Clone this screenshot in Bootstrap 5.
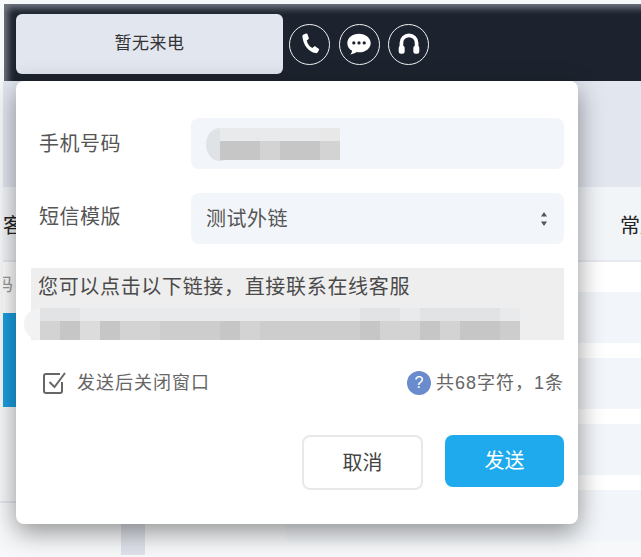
<!DOCTYPE html>
<html lang="zh">
<head>
<meta charset="utf-8">
<title>短信</title>
<link rel="stylesheet" href="https://cdn.jsdelivr.net/npm/bootstrap@5.3.0/dist/css/bootstrap.min.css">
<style>
html,body{height:557px;overflow:hidden}
body{background:#f7f8f9;font-family:"Liberation Sans","Noto Sans CJK SC",sans-serif;color:#555;position:relative}
.topgap{height:4px}
.callbar{height:77px;margin-left:4px;background:#1d232e;box-shadow:inset 7px 7px 7px -3px rgba(190,195,205,.55);padding:10px 0 7px 12px;gap:6px}
.callbox{width:267px;height:60px;background:#e2e6ef;border-radius:6px;color:#333;font-size:17px;letter-spacing:.5px}
.callicons{height:60px;gap:8.5px}
.roundbtn{width:41px;height:41px;border:1.5px solid #f2f2f2;border-radius:50%}
.roundbtn svg{width:26px;height:26px}
.band1{height:106px;background:#e2e6ef;margin-left:3px}
.band2{height:75px;background:#f2f5f8;border-bottom:2px solid #e6e9ee;color:#222;font-size:20px;padding-top:24px;margin-left:3px;overflow:hidden;white-space:nowrap}
.headright{margin-right:-19px}
.below{height:295px}
.leftcol{width:16px;font-size:18px;color:#999}
.leftcol .lettop{height:51px;background:#fff;padding:10px 0 0 0;margin-left:3px;overflow:hidden;white-space:nowrap}
.lettop span{margin-left:-8px;display:block}
.bluebit{height:94px;margin-left:3px;background:#1c9ee0}
.leftrest{height:96px;border-bottom:2px solid #e3e6ee}
.midcol{width:562px}
.midspace{height:229px}
.midlow{height:64px;font-size:18px;color:#444}
.grayblock{width:24px;height:64px;margin-left:105px;background:#dfe2ea}
.midtext{width:141px;padding:12px 0 0 30px;height:52px}
.midchip{width:292px;height:52px;background:#f2f5f9;border-radius:0 0 0 8px;padding:12px 0 0 17px}
.rightcol{flex:1}
.rw{height:30px;background:#fff}
.rb{height:51px;background:#f2f5f9}
.rw2{height:15px;background:#fff}
.smsbox{position:absolute;left:16px;top:81px;width:562px;height:443px;background:#fff;border-radius:8px;box-shadow:0 8px 26px rgba(0,0,0,.42);padding:37px 14px 0 15px;font-size:20px;letter-spacing:.5px}
.fieldrow{margin-bottom:24px}
.fieldlab{width:160px;padding-left:8px;margin-top:-3px}
.fieldrow:first-child .fieldlab{margin-top:0}
.fieldbox{flex:1;height:51px;background:#f2f5f9;border-radius:8px;padding:0 16px 0 15px;position:relative}
.fieldval{padding-top:1px}
.mos{display:flex;flex-direction:column;width:max-content}
.mosrow{display:flex}
.mosrow i{display:block;width:20px}
.mosa i{height:13px;background:#e9eaec}
.mosb i{height:19px;background:#cdcdcd}
.mosb i.s1{background:#c6c6c6}.mosb i.s2{background:#d3d3d3}.mosb i.s3{background:#dcdcdc}
.mosa i.t1{background:#e2e3e5}.mosa i.t2{background:#e8e8e8}
.phoneblur{margin-left:14px;position:relative}
.blob{position:absolute;left:-14px;top:0;width:28px;height:33px;border-radius:50%;background:#e0e3e6}
.phoneblur .mosrow{position:relative}
.msgbox{height:72px;background:#eee;padding:7px 0 0 7px;line-height:25px;margin-bottom:28px;color:#4a4a4a;letter-spacing:.67px;font-size:20px;position:relative}
.msgblur{margin:8px 0 0 2px;position:relative}
.blob2{position:absolute;left:-16px;top:0;width:32px;height:32px;border-radius:50%;background:#f2f2f2}
.msgblur .mosrow{position:relative}
.checkrow{height:30px;margin-bottom:37px;font-size:18px;letter-spacing:1px;color:#666}
.chk{margin-left:12px;margin-right:10px;width:24px;height:24px;flex:none}
.countinfo{letter-spacing:1px;font-size:18px;color:#666}
.qmark{width:24px;height:24px;border-radius:50%;background:#6a8ccc;color:#fff;font-size:16px;margin-right:5px;letter-spacing:0}
.btnline{gap:22px}
.btn.cancelbtn{width:121px;height:55px;background:#fff;border:2px solid #e8e8e8;border-radius:8px;color:#444;font-size:20px;letter-spacing:0;align-self:flex-start}
.btn.sendbtn{width:119px;height:52px;background:#1eaaec;border:0;border-radius:8px;color:#fff;font-size:20px;letter-spacing:0;align-self:flex-start}
</style>
</head>
<body>
<div class="topgap"></div>
<div class="callbar d-flex align-items-start">
  <div class="callbox d-flex align-items-center justify-content-center">暂无来电</div>
  <div class="d-flex align-items-center callicons">
    <span class="roundbtn d-flex align-items-center justify-content-center">
      <svg viewBox="0 0 24 24"><path fill="#fff" d="M6.200 3.200 8.400 2.300c.5-.2 1 0 1.200.5l1.300 3.700c.2.500 0 .9-.4 1.200L9 8.800c.7 3.200 2.500 5.500 5.200 6.900l1.500-1.300c.4-.3.900-.4 1.300-.1l3 2.100c.4.300.5.800.3 1.200l-1.200 2c-.4.700-1.200 1-2 .8C11 19.300 5.800 13.400 5 5c-.1-.8.400-1.500 1.200-1.800z"/></svg>
    </span>
    <span class="roundbtn d-flex align-items-center justify-content-center">
      <svg viewBox="0 0 24 24"><path fill="#fff" d="M12 2.500C5.900 2.500 1.200 6.300 1.200 11.200c0 3 1.800 5.500 4.500 7-.2 1.200-.8 2.400-1.700 3.400 2.200-.2 4.200-1 5.700-2.200.7.100 1.500.2 2.300.2 6.100 0 10.800-3.700 10.800-8.400S18.100 2.500 12 2.500z"/><circle cx="7.200" cy="11" r="1.500" fill="#1d232e"/><circle cx="12" cy="11" r="1.500" fill="#1d232e"/><circle cx="16.800" cy="11" r="1.500" fill="#1d232e"/></svg>
    </span>
    <span class="roundbtn d-flex align-items-center justify-content-center">
      <svg viewBox="0 0 24 24"><path fill="none" stroke="#fff" stroke-width="3.400" d="M5 15v-4a7 7 0 0 1 14 0v4"/><rect x="2.500" y="13.500" width="5.500" height="7.500" rx="2" fill="#fff"/><rect x="16" y="13.500" width="5.500" height="7.500" rx="2" fill="#fff"/></svg>
    </span>
  </div>
</div>
<div class="band1"></div>
<div class="band2 d-flex justify-content-between"><span>客户</span><span class="headright">常用</span></div>
<div class="below d-flex">
  <div class="leftcol">
    <div class="lettop"><span>码</span></div>
    <div class="bluebit"></div>
    <div class="leftrest"></div>
  </div>
  <div class="midcol">
    <div class="midspace"></div>
    <div class="midlow d-flex">
      <div class="grayblock"></div>
      <div class="midtext">指指</div>
      <div class="midchip">指指指 -</div>
    </div>
  </div>
  <div class="rightcol">
    <div class="rw"></div><div class="rb"></div><div class="rw2"></div><div class="rb"></div><div class="rw2"></div><div class="rb"></div><div class="rw2"></div><div class="rb"></div>
  </div>
</div>

<div class="smsbox">
  <div class="fieldrow d-flex align-items-center">
    <div class="fieldlab">手机号码</div>
    <div class="fieldbox d-flex align-items-center">
      <div class="mos phoneblur">
        <div class="blob"></div>
        <div class="mosrow mosa"><i></i><i></i><i></i><i></i><i></i><i class="t2"></i></div>
        <div class="mosrow mosb"><i class="s1"></i><i class="s1"></i><i class="s2"></i><i class="s1"></i><i class="s1"></i><i class="s2"></i></div>
      </div>
    </div>
  </div>
  <div class="fieldrow d-flex align-items-center">
    <div class="fieldlab">短信模版</div>
    <div class="fieldbox d-flex align-items-center justify-content-between">
      <span class="fieldval">测试外链</span>
      <svg width="8" height="16" viewBox="0 0 8 16"><path fill="#555" d="M4 1 7 5.500H1zM1 10.500h6L4 15z"/></svg>
    </div>
  </div>
  <div class="msgbox">
    <div>您可以点击以下链接&#xFF0C;直接联系在线客服</div>
    <div class="mos msgblur">
      <div class="blob2"></div>
      <div class="mosrow mosa"><i class="t1"></i><i class="t1"></i><i></i><i></i><i></i><i></i><i></i><i></i><i></i><i></i><i></i><i></i><i></i><i></i><i></i><i></i><i class="t1"></i><i class="t1"></i><i></i><i class="t1"></i><i class="t1"></i><i class="t1"></i><i class="t1"></i><i></i></div>
      <div class="mosrow mosb"><i class="s2"></i><i class="s1"></i><i class="s3"></i><i class="s1"></i><i class="s2"></i><i class="s2"></i><i></i><i></i><i></i><i class="s1"></i><i class="s2"></i><i></i><i></i><i></i><i></i><i></i><i class="s1"></i><i class="s2"></i><i class="s2"></i><i class="s1"></i><i class="s2"></i><i class="s1"></i><i class="s1"></i><i></i></div>
    </div>
  </div>
  <div class="checkrow d-flex align-items-center">
    <svg class="chk" viewBox="0 0 24 24"><path fill="none" stroke="#666" stroke-width="2" d="M19 11v9a2 2 0 0 1-2 2H3a2 2 0 0 1-2-2V5a2 2 0 0 1 2-2h14"/><path fill="none" stroke="#666" stroke-width="2" d="M6.500 11l5 5L22 2"/></svg>
    <span>发送后关闭窗口</span>
    <span class="countinfo ms-auto d-flex align-items-center"><span class="qmark d-flex align-items-center justify-content-center">?</span>共68字符&#xFF0C;1条</span>
  </div>
  <div class="btnline d-flex justify-content-end">
    <button type="button" class="btn cancelbtn">取消</button>
    <button type="button" class="btn sendbtn">发送</button>
  </div>
</div>
<script src="https://cdn.jsdelivr.net/npm/bootstrap@5.3.0/dist/js/bootstrap.bundle.min.js"></script>
</body>
</html>
